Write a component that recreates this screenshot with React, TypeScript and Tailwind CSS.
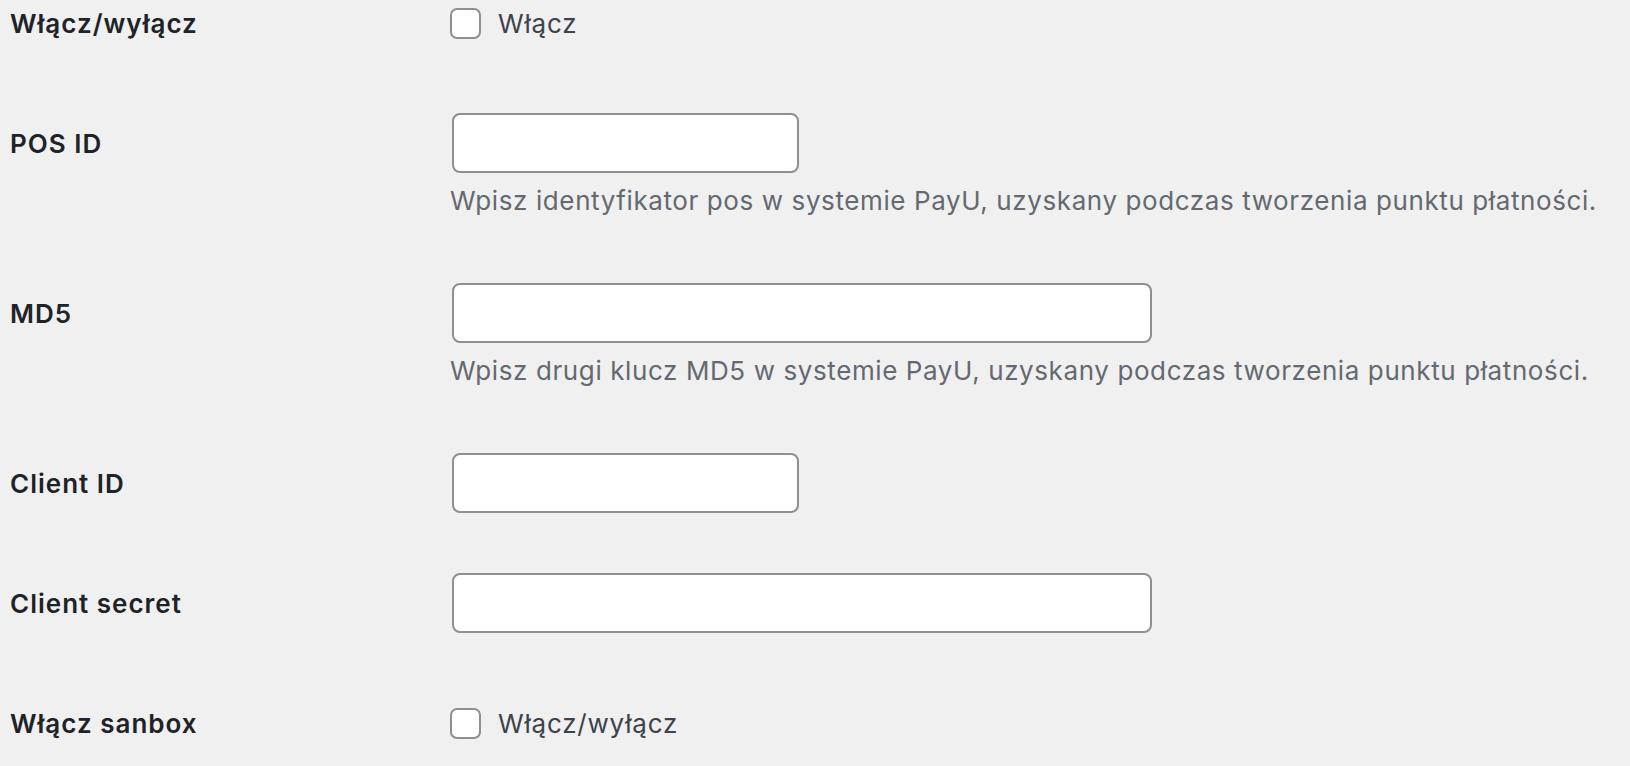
const font = { fontFamily: "Inter, 'Noto Sans', sans-serif" };

type Field =
  | { kind: "check"; label: string; text: string }
  | { kind: "input"; label: string; width: string; desc?: string };

const FIELDS: Field[] = [
  { kind: "check", label: "Włącz/wyłącz", text: "Włącz" },
  {
    kind: "input",
    label: "POS ID",
    width: "w-[347px]",
    desc: "Wpisz identyfikator pos w systemie PayU, uzyskany podczas tworzenia punktu płatności.",
  },
  {
    kind: "input",
    label: "MD5",
    width: "w-[700px]",
    desc: "Wpisz drugi klucz MD5 w systemie PayU, uzyskany podczas tworzenia punktu płatności.",
  },
  { kind: "input", label: "Client ID", width: "w-[347px]" },
  { kind: "input", label: "Client secret", width: "w-[700px]" },
  { kind: "check", label: "Włącz sanbox", text: "Włącz/wyłącz" },
];

function Row({ field, first }: { field: Field; first: boolean }) {
  return (
    <div className={`flex items-start ${first ? "pb-[30px]" : "py-[30px]"}`}>
      <div className="flex h-[60px] w-[450px] shrink-0 items-center pl-[10px] text-[26px] font-semibold tracking-[1px] text-[#1d2327]">
        {field.label}
      </div>
      <div className="flex flex-col">
        {field.kind === "check" ? (
          <label className="flex h-[60px] items-center gap-[17px] text-[26px] tracking-[0.8px] text-[#3c434a]">
            <span className="h-[31px] w-[31px] rounded-[7px] border-2 border-[#8c8f94] bg-white" />
            {field.text}
          </label>
        ) : (
          <>
            <input
              type="text"
              className={`ml-[2px] h-[60px] ${field.width} rounded-[8px] border-2 border-[#8c8f94] bg-white px-4 text-[26px] outline-none`}
            />
            {field.desc && (
              <p className="mt-[6px] text-[26px] leading-[44px] tracking-[0.6px] text-[#646970]">
                {field.desc}
              </p>
            )}
          </>
        )}
      </div>
    </div>
  );
}

export default function App() {
  return (
    <div className="h-[766px] w-[1630px] overflow-hidden bg-[#f0f0f1]" style={font}>
      <div className="-mt-[7px]">
        {FIELDS.map((f, i) => (
          <Row key={f.label} field={f} first={i === 0} />
        ))}
      </div>
    </div>
  );
}
